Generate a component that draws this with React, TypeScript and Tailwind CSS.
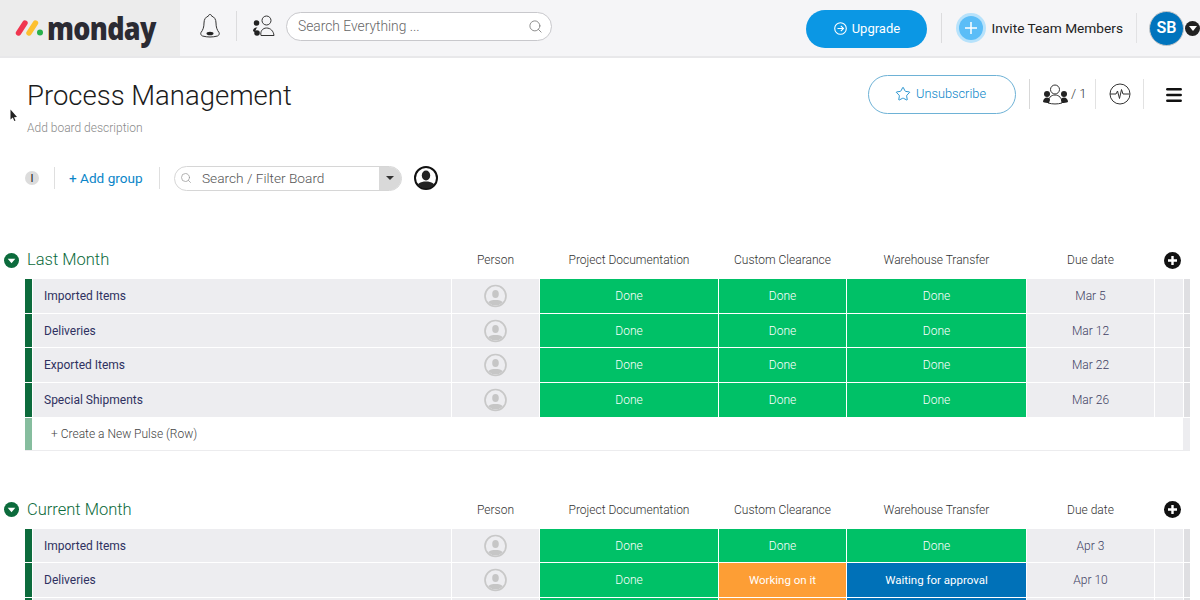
import { Search, Star, Menu } from "lucide-react";

type Status = "done" | "working" | "waiting";
type Row = { name?: string; cells: [Status, Status, Status]; due?: string };

const font = { fontFamily: '"Roboto", "Liberation Sans", sans-serif' };

const statusLabel: Record<Status, string> = {
  done: "Done",
  working: "Working on it",
  waiting: "Waiting for approval",
};

const statusClass: Record<Status, string> = {
  done: "bg-[#00c167] text-[12px] font-light",
  working: "bg-[#fd9e35] text-[11.500px] font-normal",
  waiting: "bg-[#0071b8] text-[11.500px] font-normal",
};

const lastMonth: Row[] = [
  { name: "Imported Items", cells: ["done", "done", "done"], due: "Mar 5" },
  { name: "Deliveries", cells: ["done", "done", "done"], due: "Mar 12" },
  { name: "Exported Items", cells: ["done", "done", "done"], due: "Mar 22" },
  { name: "Special Shipments", cells: ["done", "done", "done"], due: "Mar 26" },
];

// the third row only peeks in at the bottom edge, its text is below the fold
const currentMonth: Row[] = [
  { name: "Imported Items", cells: ["done", "done", "done"], due: "Apr 3" },
  { name: "Deliveries", cells: ["done", "working", "waiting"], due: "Apr 10" },
  { cells: ["done", "working", "waiting"] },
];

/* ── Drawn icons ── */

function Logo() {
  return (
    <svg width="32" height="18" viewBox="0 0 32 18">
      <line x1="4.500" y1="14" x2="11" y2="4" stroke="#f0364f" strokeWidth="5.4" strokeLinecap="round" />
      <line x1="15" y1="14" x2="21.500" y2="4" stroke="#fdc02f" strokeWidth="5.4" strokeLinecap="round" />
      <circle cx="26" cy="13.5" r="3" fill="#27b14b" />
    </svg>
  );
}

function Bell() {
  return (
    <svg width="22" height="26" viewBox="0 0 22 26" fill="none" stroke="#333" strokeWidth="1">
      <path d="M11 1.5c-1 0-1.500.6-1.500 1.500C6.500 4 5 6.500 5 10c0 4-1 7-3 9.500-.7 1 0 3 1.500 3.500 2.500.7 5 1 7.500 1s5-.3 7.500-1c1.500-.5 2.200-2.500 1.500-3.500C18 17 17 14 17 10c0-3.500-1.500-6-4.500-7 0-.9-.5-1.500-1.500-1.500z" />
      <ellipse cx="11" cy="20.500" rx="3.500" ry="1.800" fill="#222" stroke="none" />
    </svg>
  );
}

function Team() {
  return (
    <svg width="23" height="24" viewBox="0 0 23 24" fill="none">
      <circle cx="14.500" cy="6.500" r="4.500" stroke="#333" strokeWidth="1" />
      <path d="M9 21.500c-1-4 1.500-7.500 5.500-7.500s7 3 7.500 7.500z" stroke="#333" strokeWidth="1" />
      <circle cx="4.500" cy="9" r="2.800" fill="#222" />
      <path d="M1 17c0-2.500 2-4 4.500-3.500-1.500 1-2 2.500-2 4.500-.8 0-1.800-.2-2.500-1z" fill="#222" />
      <circle cx="5" cy="19" r="2.800" fill="#222" />
    </svg>
  );
}

function Subscribers() {
  return (
    <svg width="25" height="22" viewBox="0 0 25 22" fill="none">
      <circle cx="12" cy="6.500" r="4.500" stroke="#333" strokeWidth="1" />
      <path d="M5 20c0-5 3-8 7-8s7 3 7 8c-4.500 1.300-9.500 1.300-14 0z" stroke="#333" strokeWidth="1" />
      <circle cx="4" cy="11" r="3" fill="#222" />
      <path d="M0 19c0-3 2-4.500 4-4.500s3 1 3 2.500l-1 3c-2 0-4.500-.2-6-1z" fill="#222" />
      <circle cx="21" cy="11" r="3" fill="#222" />
      <path d="M25 19c0-3-2-4.500-4-4.500s-3 1-3 2.500l1 3c2 0 4.500-.2 6-1z" fill="#222" />
    </svg>
  );
}

function Activity() {
  return (
    <svg width="22" height="22" viewBox="0 0 22 22" fill="none" stroke="#333" strokeWidth="1">
      <circle cx="11" cy="11" r="10" />
      <path d="M1 11h6l1.500-3 2 7.500 2-9 1.500 4.500h6.500" />
    </svg>
  );
}

function UserBadge() {
  return (
    <svg width="24" height="24" viewBox="0 0 24 24">
      <defs>
        <clipPath id="user-clip">
          <circle cx="12" cy="12" r="10.500" />
        </clipPath>
      </defs>
      <circle cx="12" cy="12" r="11" fill="#fff" stroke="#111" strokeWidth="2" />
      <g clipPath="url(#user-clip)" fill="#222">
        <ellipse cx="12" cy="9.500" rx="4.200" ry="5" />
        <path d="M2 24c0-6 4-8.500 10-8.500s10 2.500 10 8.500z" />
      </g>
    </svg>
  );
}

function EmptyPerson() {
  return (
    <svg width="23" height="24" viewBox="0 0 23 24">
      <defs>
        <clipPath id="person-clip">
          <circle cx="11.500" cy="12" r="9.500" />
        </clipPath>
      </defs>
      <circle cx="11.500" cy="12" r="10.500" fill="#ededf0" stroke="#c8c8c8" strokeWidth="1.700" />
      <g clipPath="url(#person-clip)" fill="#c6c6c6">
        <ellipse cx="11.500" cy="10" rx="3.300" ry="4" />
        <path d="M2 23c0-5 4-7 9.500-7s9.500 2 9.500 7z" />
      </g>
    </svg>
  );
}

function ChevronBadge() {
  return (
    <svg width="15" height="15" viewBox="0 0 15 15">
      <circle cx="7.500" cy="7.500" r="7.500" fill="#0c6b3c" />
      <path d="M3.700 5.800h7.600L7.500 10.300z" fill="#fff" />
    </svg>
  );
}

function PlusBadge() {
  return (
    <svg width="17" height="17" viewBox="0 0 17 17">
      <circle cx="8.500" cy="8.500" r="8.500" fill="#111" />
      <path d="M8.500 4v9M4 8.500h9" stroke="#fff" strokeWidth="2.400" />
    </svg>
  );
}

/* ── Board group ── */

function Group({ title, rows, addRow }: { title: string; rows: Row[]; addRow?: boolean }) {
  return (
    <section>
      <div className="grid h-[42px] grid-cols-[7px_418px_87px_178px_127px_179px_127px_36px] items-center gap-x-px pt-[4px] pl-[25px]">
        <div className="col-span-2 -ml-[21px] flex items-center gap-[8px]">
          <ChevronBadge />
          <h2 className="text-[16.500px] leading-none font-light text-[#0c6b3c]">{title}</h2>
        </div>
        {["Person", "Project Documentation", "Custom Clearance", "Warehouse Transfer", "Due date"].map((label) => (
          <div key={label} className="text-center text-[12px] font-light text-[#333]">
            {label}
          </div>
        ))}
        <div className="-ml-px flex justify-center">
          <PlusBadge />
        </div>
      </div>

      {rows.map((row, idx) => (
        <div
          key={idx}
          className="mb-px grid h-[33.700px] grid-cols-[7px_418px_87px_178px_127px_179px_127px_28px_6px] gap-x-px pl-[25px]"
        >
          <div className="bg-[#0c6b3c]" />
          <div className="flex items-center bg-[#ededf0] pl-[11px] text-[12px] font-normal text-[#2f3161]">
            {row.name}
          </div>
          <div className="flex items-center justify-center bg-[#ededf0]">
            <EmptyPerson />
          </div>
          {row.cells.map((cell, i) => (
            <div key={i} className={`flex items-center justify-center text-white ${statusClass[cell]}`}>
              {row.name && statusLabel[cell]}
            </div>
          ))}
          <div className="flex items-center justify-center bg-[#ededf0] text-[12px] font-light text-[#3f3f63]">
            {row.due}
          </div>
          <div className="bg-[#ededf0]" />
          <div className="bg-[#dfdfe2]" />
        </div>
      ))}

      {addRow && (
        <div className="ml-[25px] flex h-[33px] w-[1165px] items-stretch border-b border-[#ececee]">
          <div className="w-[7px] bg-[#86bd9e]" />
          <div className="flex flex-1 items-center pl-[19px] text-[12px] font-light text-[#444]">
            + Create a New Pulse (Row)
          </div>
          <div className="w-[7px] bg-[#ededf0]" />
        </div>
      )}
    </section>
  );
}

export default function App() {
  return (
    <div className="relative h-[600px] w-[1200px] overflow-hidden bg-white" style={font}>
      {/* Top bar */}
      <header className="flex h-[58px] items-stretch border-b-2 border-[#e8e8ea] bg-[#f5f5f7]">
        <div className="flex w-[180px] items-center gap-[1px] bg-[#ececec] pl-[14px]">
          <Logo />
          <span
            className="origin-left scale-x-[0.87] text-[31px] leading-none font-extrabold tracking-[-0.8px] text-[#2b2b33]"
            style={{ fontFamily: '"Open Sans", sans-serif' }}
          >
            monday
          </span>
        </div>
        <div className="flex items-center pb-[4px] pl-[19px]">
          <Bell />
          <div className="mx-[15px] h-[30px] w-px bg-[#dcdcde]" />
          <Team />
          <div className="ml-[11px] flex h-[29px] w-[266px] items-center justify-between rounded-full border border-[#c8c8cc] bg-white pr-[8px] pl-[11px] text-[13.800px] font-light text-[#666]">
            <span>Search Everything ...</span>
            <Search size={15} strokeWidth={1.500} className="text-[#888]" />
          </div>
        </div>
        <div className="ml-auto flex items-center">
          <button className="mt-[1px] flex h-[38px] w-[121px] items-center justify-center gap-[5px] rounded-full bg-[#0b97e4] text-[13px] text-white">
            <svg width="13" height="13" viewBox="0 0 13 13" fill="none" stroke="#fff" strokeWidth="1.100">
              <circle cx="6.500" cy="6.500" r="5.800" />
              <path d="M3.500 6.500h6M6.800 3.800l2.700 2.700-2.700 2.700" />
            </svg>
            Upgrade
          </button>
          <div className="mr-[13px] ml-[14px] h-[30px] w-px bg-[#dcdcde]" />
          <div className="flex items-center">
            <div className="ml-[1px] flex h-[30px] w-[30px] items-center justify-center rounded-full bg-[#b7e2fb]">
              <div className="flex h-[24px] w-[24px] items-center justify-center rounded-full bg-[#5bbdf7]">
                <svg width="12" height="12" viewBox="0 0 12 12">
                  <path d="M6 0v12M0 6h12" stroke="#fff" strokeWidth="1.500" />
                </svg>
              </div>
            </div>
            <span className="ml-[5px] text-[13.700px] text-[#222]">Invite Team Members</span>
          </div>
          <div className="mx-[13px] h-[30px] w-px bg-[#e2e2e4]" />
          <div className="ml-[-1px] flex h-[35px] w-[35px] items-center justify-center rounded-full border border-[#c9c9c9] bg-[#0074bd] text-[16px] font-semibold text-white">
            SB
          </div>
          <div className="ml-[1px] flex h-[15px] w-[15px] items-center justify-center rounded-full bg-[#222]">
            <div className="h-0 w-0 border-x-[4px] border-t-[5px] border-x-transparent border-t-white" />
          </div>
        </div>
      </header>

      {/* Board heading */}
      <div className="flex justify-between pt-[17px] pl-[27px]">
        <div>
          <h1 className="pt-[2px] text-[27.500px] leading-[38px] font-light text-[#1c1c1c]">Process Management</h1>
          <p className="mt-[4px] text-[12px] font-light text-[#8a8a8a]">Add board description</p>
        </div>
        <div className="-mt-px flex h-[40px] items-center pr-[16px]">
          <button className="flex h-[39px] w-[148px] items-center justify-center gap-[5px] rounded-full border border-[#6eb2d6] pr-[3px] text-[12.800px] font-light text-[#0a85c8]">
            <Star size={16} strokeWidth={1.300} />
            Unsubscribe
          </button>
          <div className="mx-[13px] h-[30px] w-px bg-[#d8d8d8]" />
          <Subscribers />
          <span className="ml-[3px] w-[14px] text-[13px] font-light whitespace-nowrap text-[#333]">/ 1</span>
          <div className="mx-[10px] h-[30px] w-px bg-[#e2e2e2]" />
          <div className="ml-[3px]">
            <Activity />
          </div>
          <div className="mx-[12px] h-[30px] w-px bg-[#e2e2e2]" />
          <Menu size={20} strokeWidth={3} className="ml-[8px] mt-px text-[#111]" />
        </div>
      </div>

      {/* Toolbar */}
      <div className="mt-[28px] flex h-[26px] items-center pl-[25px]">
        <div className="flex h-[14px] w-[14px] items-center justify-center rounded-full bg-[#dcdcdc] text-[11px] leading-none text-[#222]">
          I
        </div>
        <div className="mr-[14px] ml-[15px] h-[22px] w-px bg-[#dfdfdf]" />
        <span className="w-[74px] text-[13.600px] whitespace-nowrap text-[#0a85c8]">+ Add group</span>
        <div className="mr-[14px] ml-[16px] h-[22px] w-px bg-[#dfdfdf]" />
        <div className="flex h-[25px] w-[228px] items-center overflow-hidden rounded-full border border-[#d6d6d6]">
          <Search size={12} strokeWidth={1.500} className="ml-[5px] text-[#999]" />
          <span className="ml-[10px] flex-1 text-[13.700px] font-light text-[#555]">Search / Filter Board</span>
          <div className="flex h-full w-[22px] items-center justify-center bg-[#d9d9d9]">
            <div className="h-0 w-0 border-x-[4px] border-t-[4px] border-x-transparent border-t-[#333]" />
          </div>
        </div>
        <div className="ml-[12px]">
          <UserBadge />
        </div>
      </div>

      {/* Board groups */}
      <div className="mt-[46px]">
        <Group title="Last Month" rows={lastMonth} addRow />
      </div>
      <div className="mt-[36px]">
        <Group title="Current Month" rows={currentMonth} />
      </div>

      {/* Mouse pointer caught in the capture */}
      <svg className="absolute top-[109px] left-[10px]" width="8" height="13" viewBox="0 0 8 13">
        <path d="M.5.500v10l2.300-2 1.500 3.500 1.200-.5-1.500-3.300 3-.2z" fill="#222" />
      </svg>
    </div>
  );
}
